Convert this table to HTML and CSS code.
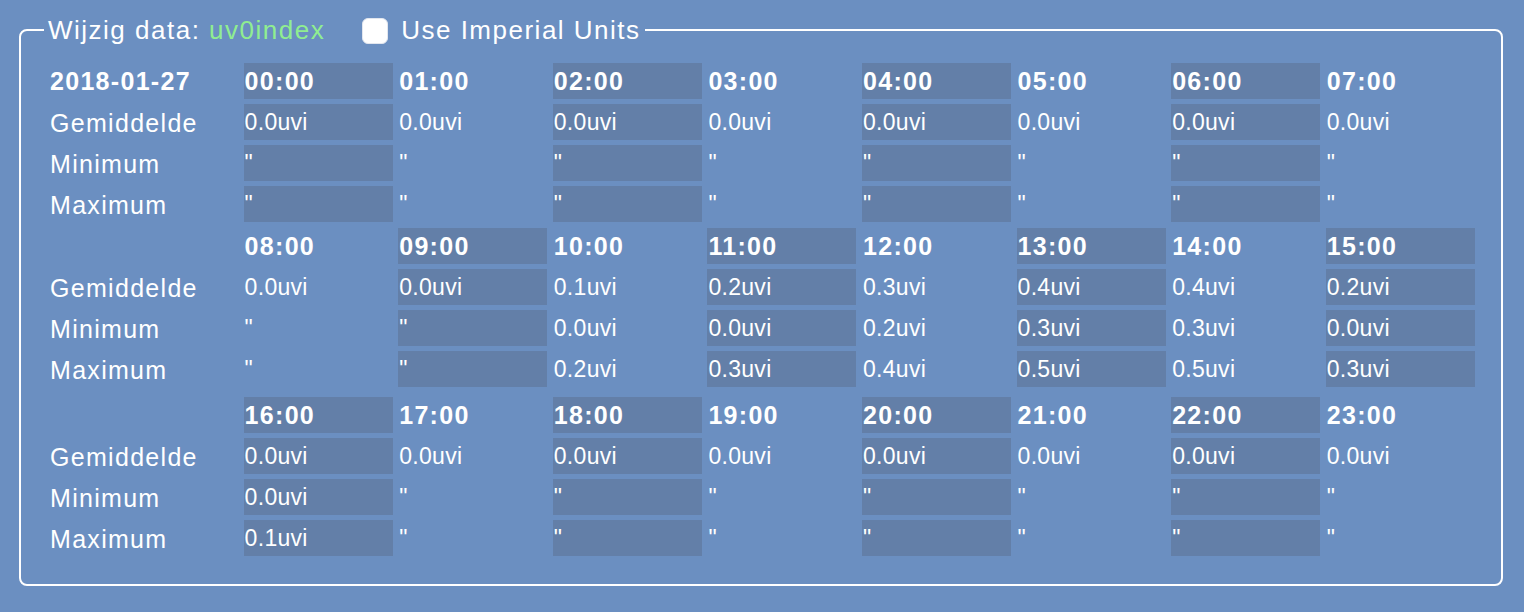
FILE: index.html
```html
<!DOCTYPE html>
<html>
<head>
<meta charset="utf-8">
<link rel="stylesheet" href="styles.css">
</head>
<body>
<fieldset class="panel">
  <legend class="legend">Wijzig data: <span class="sensor">uv0index</span><input type="checkbox" class="chk"><span>Use Imperial Units</span></legend>

  <div class="blk">
    <div class="lbl hd">2018-01-27</div>
    <div class="c hd s">00:00</div><div class="c hd">01:00</div><div class="c hd s">02:00</div><div class="c hd">03:00</div><div class="c hd s">04:00</div><div class="c hd">05:00</div><div class="c hd s">06:00</div><div class="c hd">07:00</div>
    <div class="lbl">Gemiddelde</div>
    <div class="c s">0.0uvi</div><div class="c">0.0uvi</div><div class="c s">0.0uvi</div><div class="c">0.0uvi</div><div class="c s">0.0uvi</div><div class="c">0.0uvi</div><div class="c s">0.0uvi</div><div class="c">0.0uvi</div>
    <div class="lbl">Minimum</div>
    <div class="c s">"</div><div class="c">"</div><div class="c s">"</div><div class="c">"</div><div class="c s">"</div><div class="c">"</div><div class="c s">"</div><div class="c">"</div>
    <div class="lbl">Maximum</div>
    <div class="c s">"</div><div class="c">"</div><div class="c s">"</div><div class="c">"</div><div class="c s">"</div><div class="c">"</div><div class="c s">"</div><div class="c">"</div>
  </div>

  <div class="blk blk2">
    <div class="lbl hd"></div>
    <div class="c hd">08:00</div><div class="c hd s">09:00</div><div class="c hd">10:00</div><div class="c hd s">11:00</div><div class="c hd">12:00</div><div class="c hd s">13:00</div><div class="c hd">14:00</div><div class="c hd s">15:00</div>
    <div class="lbl">Gemiddelde</div>
    <div class="c">0.0uvi</div><div class="c s">0.0uvi</div><div class="c">0.1uvi</div><div class="c s">0.2uvi</div><div class="c">0.3uvi</div><div class="c s">0.4uvi</div><div class="c">0.4uvi</div><div class="c s">0.2uvi</div>
    <div class="lbl">Minimum</div>
    <div class="c">"</div><div class="c s">"</div><div class="c">0.0uvi</div><div class="c s">0.0uvi</div><div class="c">0.2uvi</div><div class="c s">0.3uvi</div><div class="c">0.3uvi</div><div class="c s">0.0uvi</div>
    <div class="lbl">Maximum</div>
    <div class="c">"</div><div class="c s">"</div><div class="c">0.2uvi</div><div class="c s">0.3uvi</div><div class="c">0.4uvi</div><div class="c s">0.5uvi</div><div class="c">0.5uvi</div><div class="c s">0.3uvi</div>
  </div>

  <div class="blk blk3">
    <div class="lbl hd"></div>
    <div class="c hd s">16:00</div><div class="c hd">17:00</div><div class="c hd s">18:00</div><div class="c hd">19:00</div><div class="c hd s">20:00</div><div class="c hd">21:00</div><div class="c hd s">22:00</div><div class="c hd">23:00</div>
    <div class="lbl">Gemiddelde</div>
    <div class="c s">0.0uvi</div><div class="c">0.0uvi</div><div class="c s">0.0uvi</div><div class="c">0.0uvi</div><div class="c s">0.0uvi</div><div class="c">0.0uvi</div><div class="c s">0.0uvi</div><div class="c">0.0uvi</div>
    <div class="lbl">Minimum</div>
    <div class="c s">0.0uvi</div><div class="c">"</div><div class="c s">"</div><div class="c">"</div><div class="c s">"</div><div class="c">"</div><div class="c s">"</div><div class="c">"</div>
    <div class="lbl">Maximum</div>
    <div class="c s">0.1uvi</div><div class="c">"</div><div class="c s">"</div><div class="c">"</div><div class="c s">"</div><div class="c">"</div><div class="c s">"</div><div class="c">"</div>
  </div>
</fieldset>
</body>
</html>
```
FILE: styles.css
```css
html, body {
  margin: 0;
  padding: 0;
  background: #6b8fc1;
  color: #ffffff;
  font-family: "Liberation Sans", Arial, sans-serif;
}

.panel {
  box-sizing: border-box;
  margin: 15px 21px 0 19px;
  padding: 18px 0 28px 24px;
  border: 2px solid #ffffff;
  border-radius: 8px;
  min-width: 0;
}

.legend {
  padding: 0 4px;
  margin-left: -1px;
  font-size: 26px;
  line-height: 30px;
  letter-spacing: 1.5px;
  white-space: nowrap;
}

.sensor {
  color: #90ee90;
}

.chk {
  -webkit-appearance: none;
  appearance: none;
  box-sizing: border-box;
  width: 26px;
  height: 26px;
  margin: 0 13px 0 37px;
  background: #ffffff;
  border: 1px solid #e2e6ee;
  border-radius: 6px;
  vertical-align: middle;
  position: relative;
  top: -1px;
}

.blk {
  display: grid;
  grid-template-columns: 193px repeat(8, 149px);
  grid-auto-rows: 36px;
  column-gap: 5.6px;
  row-gap: 5px;
}

.blk2 {
  margin-top: 6px;
}

.blk3 {
  margin-top: 10px;
}

.lbl {
  display: flex;
  align-items: center;
  padding: 3px 0 0 5px;
  font-size: 25px;
  letter-spacing: 1.3px;
  white-space: nowrap;
}

.c {
  display: flex;
  align-items: center;
  padding-left: 1px;
  font-size: 23px;
  letter-spacing: 0.3px;
  white-space: nowrap;
}

.hd {
  padding-top: 0;
  font-size: 25px;
  font-weight: bold;
  letter-spacing: 1.3px;
}

.s {
  background: #637fa8;
}
```
